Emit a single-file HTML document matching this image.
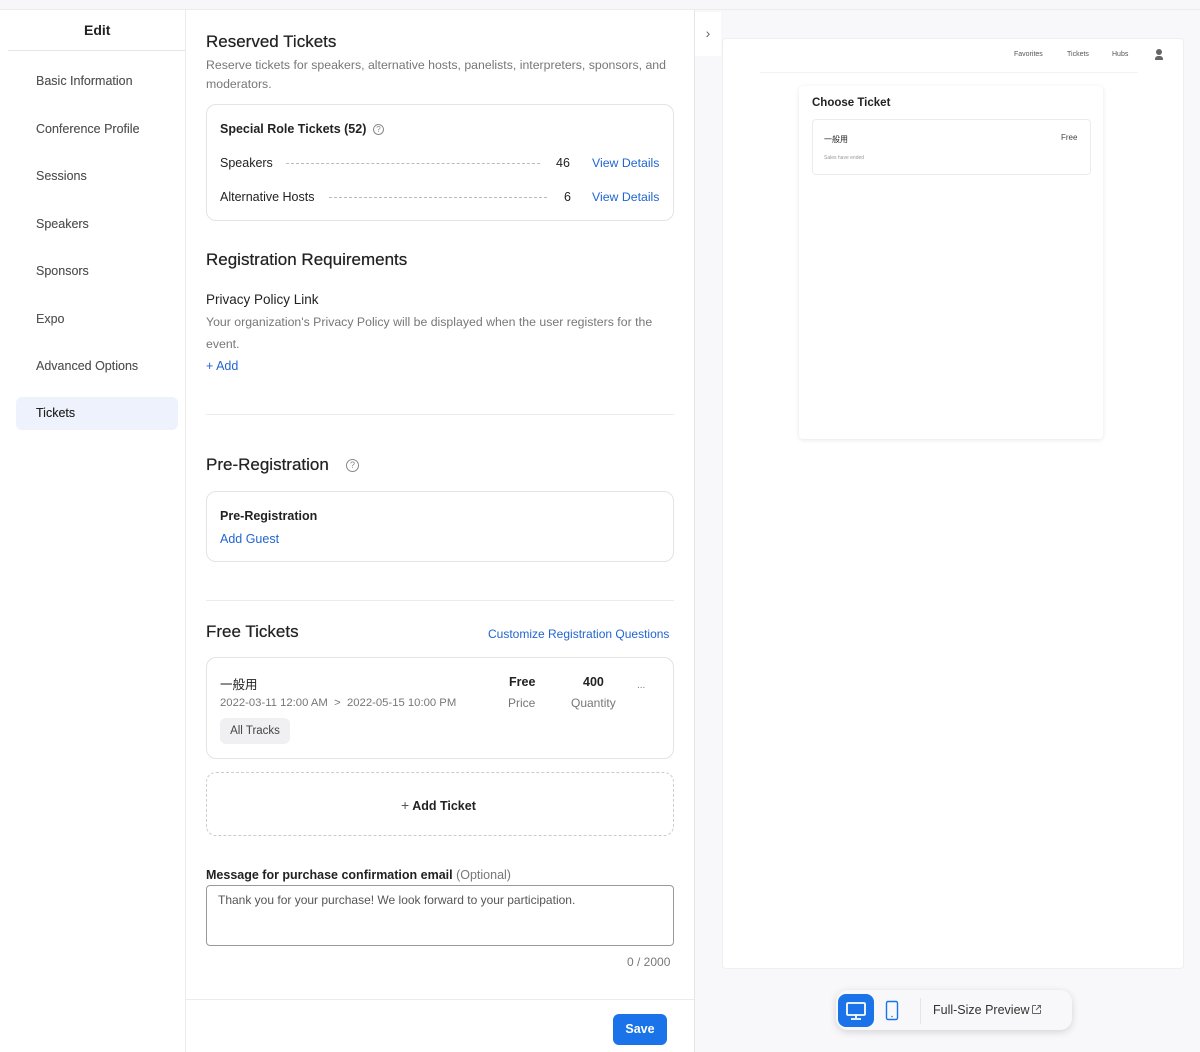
<!DOCTYPE html>
<html><head><meta charset="utf-8"><style>
*{box-sizing:border-box;margin:0;padding:0}
body{width:1200px;height:1052px;position:relative;overflow:hidden;background:#fff;font-family:"Liberation Sans","Noto Sans CJK JP",sans-serif;color:#222}
.a{position:absolute;white-space:nowrap}
.nav{position:absolute;left:36px;font-size:12.5px;color:#555;font-weight:500;text-shadow:0 0 .3px #555}
.blue{color:#2166d1}
.card{position:absolute;border:1px solid #e3e3e8;border-radius:10px;background:#fff}
.dots{position:absolute;border-top:1px dashed #bbb;height:0}
.g{color:#777}
.h{text-shadow:0 0 .5px #222}
</style></head><body>
<div class="a" style="left:0;top:0;width:1200px;height:10px;background:#f7f7f9;border-bottom:1px solid #ececef"></div>
<div class="a" style="left:185px;top:10px;width:1px;height:1042px;background:#ececef"></div>
<div class="a" style="left:84px;top:22px;font-size:14px;font-weight:bold">Edit</div>
<div class="a" style="left:8px;top:50px;width:177px;height:1px;background:#e5e5e8"></div>
<div class="nav" style="top:74px">Basic Information</div>
<div class="nav" style="top:122px">Conference Profile</div>
<div class="nav" style="top:169px">Sessions</div>
<div class="nav" style="top:217px">Speakers</div>
<div class="nav" style="top:264px">Sponsors</div>
<div class="nav" style="top:312px">Expo</div>
<div class="nav" style="top:359px">Advanced Options</div>
<div class="a" style="left:16px;top:397px;width:162px;height:33px;background:#edf2fc;border-radius:6px"></div>
<div class="nav" style="top:406px;color:#222">Tickets</div>
<div class="a h" style="left:206px;top:32px;font-size:17px">Reserved Tickets</div>
<div class="a g" style="left:206px;top:56px;font-size:12.3px;line-height:19px;white-space:normal;width:470px">Reserve tickets for speakers, alternative hosts, panelists, interpreters, sponsors, and moderators.</div>
<div class="card" style="left:206px;top:104px;width:468px;height:117px"></div>
<div class="a" style="left:220px;top:122px;font-size:12.5px;font-weight:bold">Special Role Tickets (52)</div>
<div class="a" style="left:373px;top:124px;width:11px;height:11px;border:1px solid #888;border-radius:50%;font-size:8px;text-align:center;line-height:9px;color:#888">?</div>
<div class="a" style="left:220px;top:156px;font-size:12.5px">Speakers</div>
<div class="dots" style="left:286px;top:163px;width:254px"></div>
<div class="a" style="left:556px;top:156px;font-size:12.5px">46</div>
<div class="a blue" style="left:592px;top:156px;font-size:12.3px">View Details</div>
<div class="a" style="left:220px;top:190px;font-size:12.5px">Alternative Hosts</div>
<div class="dots" style="left:329px;top:197px;width:218px"></div>
<div class="a" style="left:564px;top:190px;font-size:12.5px">6</div>
<div class="a blue" style="left:592px;top:190px;font-size:12.3px">View Details</div>
<div class="a h" style="left:206px;top:250px;font-size:17px">Registration Requirements</div>
<div class="a" style="left:206px;top:292px;font-size:13.5px">Privacy Policy Link</div>
<div class="a g" style="left:206px;top:311px;font-size:12.3px;line-height:22px;white-space:normal;width:470px">Your organization's Privacy Policy will be displayed when the user registers for the event.</div>
<div class="a blue" style="left:206px;top:359px;font-size:12.5px">+ Add</div>
<div class="a" style="left:206px;top:414px;width:468px;height:1px;background:#ececef"></div>
<div class="a h" style="left:206px;top:455px;font-size:17px">Pre-Registration</div>
<div class="a" style="left:346px;top:459px;width:13px;height:13px;border:1px solid #888;border-radius:50%;font-size:9px;text-align:center;line-height:11px;color:#888">?</div>
<div class="card" style="left:206px;top:491px;width:468px;height:71px"></div>
<div class="a" style="left:220px;top:509px;font-size:12.5px;font-weight:bold">Pre-Registration</div>
<div class="a blue" style="left:220px;top:532px;font-size:12.5px">Add Guest</div>
<div class="a" style="left:206px;top:600px;width:468px;height:1px;background:#ececef"></div>
<div class="a h" style="left:206px;top:622px;font-size:17px">Free Tickets</div>
<div class="a blue" style="left:488px;top:627px;font-size:12px">Customize Registration Questions</div>
<div class="card" style="left:206px;top:657px;width:468px;height:102px"></div>
<div class="a" style="left:220px;top:674px;font-size:12.5px">一般用</div>
<div class="a g" style="left:220px;top:697px;font-size:11.3px">2022-03-11 12:00 AM &nbsp;&gt;&nbsp; 2022-05-15 10:00 PM</div>
<div class="a" style="left:509px;top:675px;font-size:12.5px;font-weight:bold">Free</div>
<div class="a g" style="left:508px;top:696px;font-size:12px">Price</div>
<div class="a" style="left:583px;top:675px;font-size:12.5px;font-weight:bold">400</div>
<div class="a g" style="left:571px;top:696px;font-size:12px">Quantity</div>
<div class="a g" style="left:637px;top:680px;font-size:10px">...</div>
<div class="a" style="left:220px;top:718px;width:70px;height:26px;background:#f0f0f3;border-radius:6px;font-size:11.5px;color:#444;line-height:26px;text-align:center">All Tracks</div>
<div class="a" style="left:206px;top:772px;width:468px;height:64px;border:1px dashed #ccc;border-radius:10px"></div>
<div class="a" style="left:401px;top:797px;font-size:12.5px;font-weight:bold"><span style="font-weight:normal;color:#555;font-size:14px">+</span> Add Ticket</div>
<div class="a" style="left:206px;top:868px;font-size:12.5px;font-weight:bold">Message for purchase confirmation email <span style="font-weight:normal;color:#777">(Optional)</span></div>
<div class="a" style="left:206px;top:885px;width:468px;height:61px;border:1px solid #999;border-radius:4px"></div>
<div class="a" style="left:218px;top:893px;font-size:12px;color:#555">Thank you for your purchase! We look forward to your participation.</div>
<div class="a g" style="left:627px;top:955px;font-size:12px">0 / 2000</div>
<div class="a" style="left:186px;top:999px;width:508px;height:1px;background:#ececef"></div>
<div class="a" style="left:613px;top:1014px;width:54px;height:31px;background:#1a73e8;border-radius:6px;color:#fff;font-size:12.5px;font-weight:bold;text-align:center;line-height:31px">Save</div>
<div class="a" style="left:694px;top:10px;width:506px;height:1042px;background:#f8f8fa;border-left:1px solid #e5e5e8"></div>
<div class="a" style="left:695px;top:12px;width:26px;height:44px;background:#fff;color:#666;font-size:14px;text-align:center;line-height:42px">&#8250;</div>
<div class="a" style="left:722px;top:38px;width:462px;height:931px;background:#fff;border:1px solid #efeff2;border-radius:4px"></div>
<div class="a" style="left:1014px;top:51px;font-size:7px;color:#555">Favorites</div>
<div class="a" style="left:1067px;top:51px;font-size:7px;color:#555">Tickets</div>
<div class="a" style="left:1112px;top:51px;font-size:7px;color:#555">Hubs</div>
<div class="a" style="left:1155px;top:49px;width:8px;height:12px"><div style="width:6px;height:6px;border-radius:50%;background:#666;margin-left:1px"></div><div style="width:8px;height:4px;background:#666;border-radius:3px 3px 0 0;margin-top:1px"></div></div>
<div class="a" style="left:760px;top:72px;width:378px;height:1px;background:#f2f2f4"></div>
<div class="a" style="left:799px;top:86px;width:304px;height:353px;background:#fff;border-radius:4px;box-shadow:0 1px 5px rgba(0,0,0,.1)"></div>
<div class="a" style="left:812px;top:97px;font-size:11.5px;font-weight:bold">Choose Ticket</div>
<div class="a" style="left:812px;top:119px;width:279px;height:56px;border:1px solid #ececef;border-radius:4px"></div>
<div class="a" style="left:824px;top:134px;font-size:8px">一般用</div>
<div class="a" style="left:1061px;top:133px;font-size:8px;color:#444">Free</div>
<div class="a" style="left:824px;top:155px;font-size:5px;color:#999">Sales have ended</div>
<div class="a" style="left:836px;top:990px;width:236px;height:40px;background:#f8f8fa;border-radius:12px;box-shadow:0 2px 8px rgba(0,0,0,.15)"></div>
<div class="a" style="left:838px;top:994px;width:36px;height:33px;background:#1a73e8;border-radius:8px"></div>
<svg class="a" style="left:845px;top:1001px" width="22" height="20" viewBox="0 0 22 20"><rect x="2" y="2" width="18" height="12" rx="1" fill="none" stroke="#fff" stroke-width="1.8"/><path d="M11 14v3M6 18h10" stroke="#fff" stroke-width="1.8"/></svg>
<svg class="a" style="left:885px;top:1000px" width="14" height="22" viewBox="0 0 14 22"><rect x="1.5" y="1.5" width="11" height="18" rx="1.5" fill="none" stroke="#1a73e8" stroke-width="1.4"/><circle cx="7" cy="16.5" r=".8" fill="#1a73e8"/></svg>
<div class="a" style="left:920px;top:998px;width:1px;height:26px;background:#e5e5e8"></div>
<div class="a" style="left:933px;top:1003px;font-size:12.5px;color:#333">Full-Size Preview</div>
<svg class="a" style="left:1031px;top:1004px" width="11" height="11" viewBox="0 0 11 11"><path d="M5 1.5H2a.5.5 0 0 0-.5.5v7a.5.5 0 0 0 .5.5h7a.5.5 0 0 0 .5-.5V6M6.5 1.5h3v3M9.5 1.5L5 6" fill="none" stroke="#666" stroke-width="1"/></svg>
</body></html>
